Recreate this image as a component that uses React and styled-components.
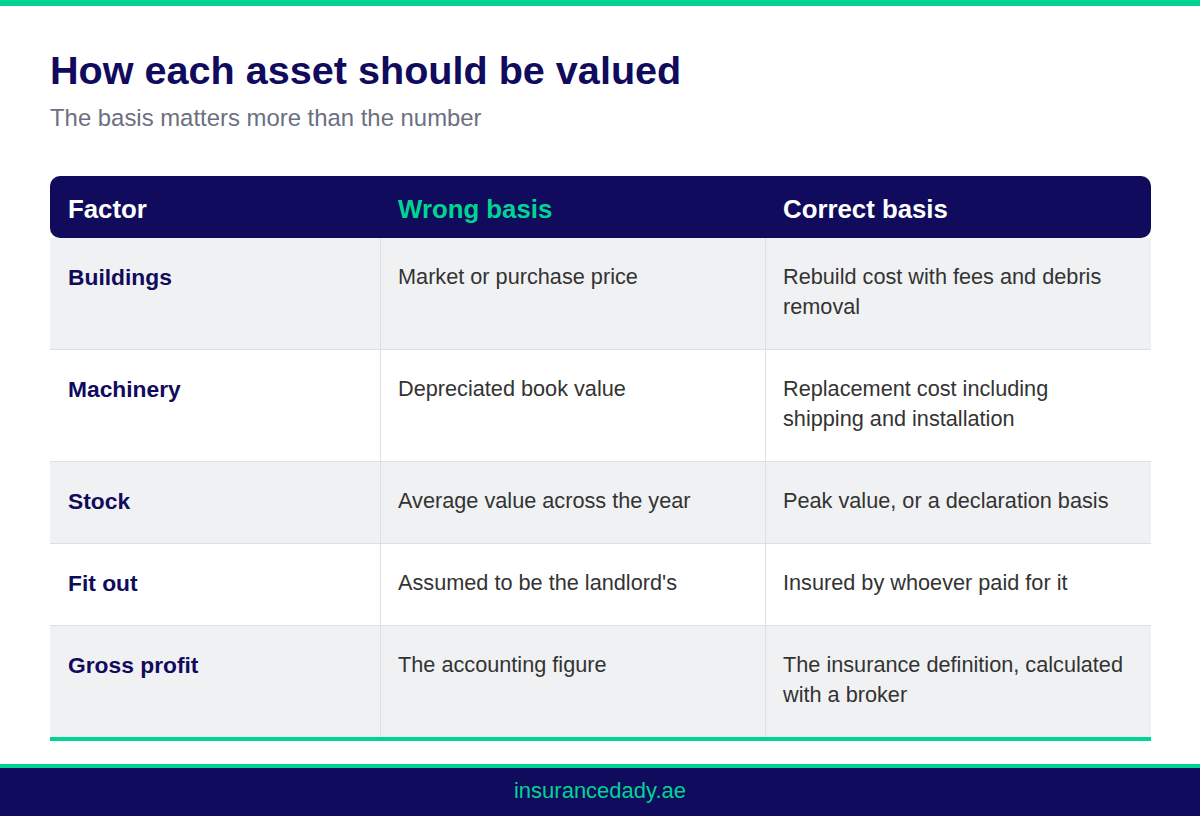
import styled, { createGlobalStyle } from 'styled-components';

const GlobalStyle = createGlobalStyle`
	html, body {
		margin: 0;
		padding: 0;
		background: #ffffff;
	}
	body {
		font-family: "Liberation Sans", Arial, sans-serif;
	}
`;

const NAVY = '#100b5c';
const GREEN = '#00d492';

const rows = [
	{ factor: 'Buildings', wrong: 'Market or purchase price', correct: 'Rebuild cost with fees and debris removal' },
	{ factor: 'Machinery', wrong: 'Depreciated book value', correct: 'Replacement cost including shipping and installation' },
	{ factor: 'Stock', wrong: 'Average value across the year', correct: 'Peak value, or a declaration basis' },
	{ factor: 'Fit out', wrong: "Assumed to be the landlord's", correct: 'Insured by whoever paid for it' },
	{ factor: 'Gross profit', wrong: 'The accounting figure', correct: 'The insurance definition, calculated with a broker' },
];

const App = () => {
	return (
		<Page>
			<GlobalStyle />
			<TopBar />
			<Main>
				<Title>How each asset should be valued</Title>
				<Subtitle>The basis matters more than the number</Subtitle>
				<Table>
					<HeaderRow>
						<HeadCell>Factor</HeadCell>
						<HeadCell $accent>Wrong basis</HeadCell>
						<HeadCell>Correct basis</HeadCell>
					</HeaderRow>
					{rows.map((row, i) => (
						<Row key={row.factor} $shaded={i % 2 === 0} $last={i === rows.length - 1}>
							<FactorCell>{row.factor}</FactorCell>
							<Cell $divider>{row.wrong}</Cell>
							<Cell $divider>{row.correct}</Cell>
						</Row>
					))}
				</Table>
			</Main>
			<Footer>
				<FooterLink>insurancedady.ae</FooterLink>
			</Footer>
		</Page>
	);
};

const Page = styled.div`
	width: 1200px;
	height: 816px;
	display: flex;
	flex-direction: column;
	background: #ffffff;
	overflow: hidden;
`;

const TopBar = styled.div`
	height: 6px;
	background: ${GREEN};
	flex-shrink: 0;
`;

const Main = styled.main`
	flex: 1;
	padding: 40px 49px 0 50px;
`;

const Title = styled.h1`
	margin: 0;
	font-size: 39.6px;
	line-height: 48px;
	font-weight: 700;
	color: ${NAVY};
`;

const Subtitle = styled.p`
	margin: 10px 0 0;
	font-size: 23.9px;
	line-height: 28px;
	color: #6b7080;
`;

const Table = styled.div`
	margin-top: 44px;
	display: flex;
	flex-direction: column;
`;

const columns = '330px 385px 1fr';

const HeaderRow = styled.div`
	display: grid;
	grid-template-columns: ${columns};
	height: 62px;
	align-items: center;
	background: ${NAVY};
	border-radius: 10px;
`;

const HeadCell = styled.div`
	padding: 4px 18px 0;
	font-size: 25.8px;
	font-weight: 700;
	color: ${(p) => (p.$accent ? GREEN : '#ffffff')};
`;

const Row = styled.div`
	display: grid;
	grid-template-columns: ${columns};
	background: ${(p) => (p.$shaded ? '#f0f1f3' : '#ffffff')};
	border-bottom: ${(p) => (p.$last ? `4px solid ${GREEN}` : '1px solid #dedfe3')};
`;

const Cell = styled.div`
	padding: 24px 18px 27px ${(p) => (p.$divider ? '17px' : '18px')};
	font-size: 21.7px;
	line-height: 30px;
	color: #333333;
	border-left: ${(p) => (p.$divider ? '1px solid #dedfe3' : 'none')};
`;

const FactorCell = styled(Cell)`
	font-size: 22.8px;
	font-weight: 700;
	color: ${NAVY};
`;

const Footer = styled.footer`
	height: 48px;
	flex-shrink: 0;
	border-top: 4px solid ${GREEN};
	background: ${NAVY};
	display: flex;
	align-items: center;
	justify-content: center;
`;

const FooterLink = styled.span`
	font-size: 22px;
	line-height: 26px;
	margin-bottom: 2px;
	color: ${GREEN};
`;

export default App;
